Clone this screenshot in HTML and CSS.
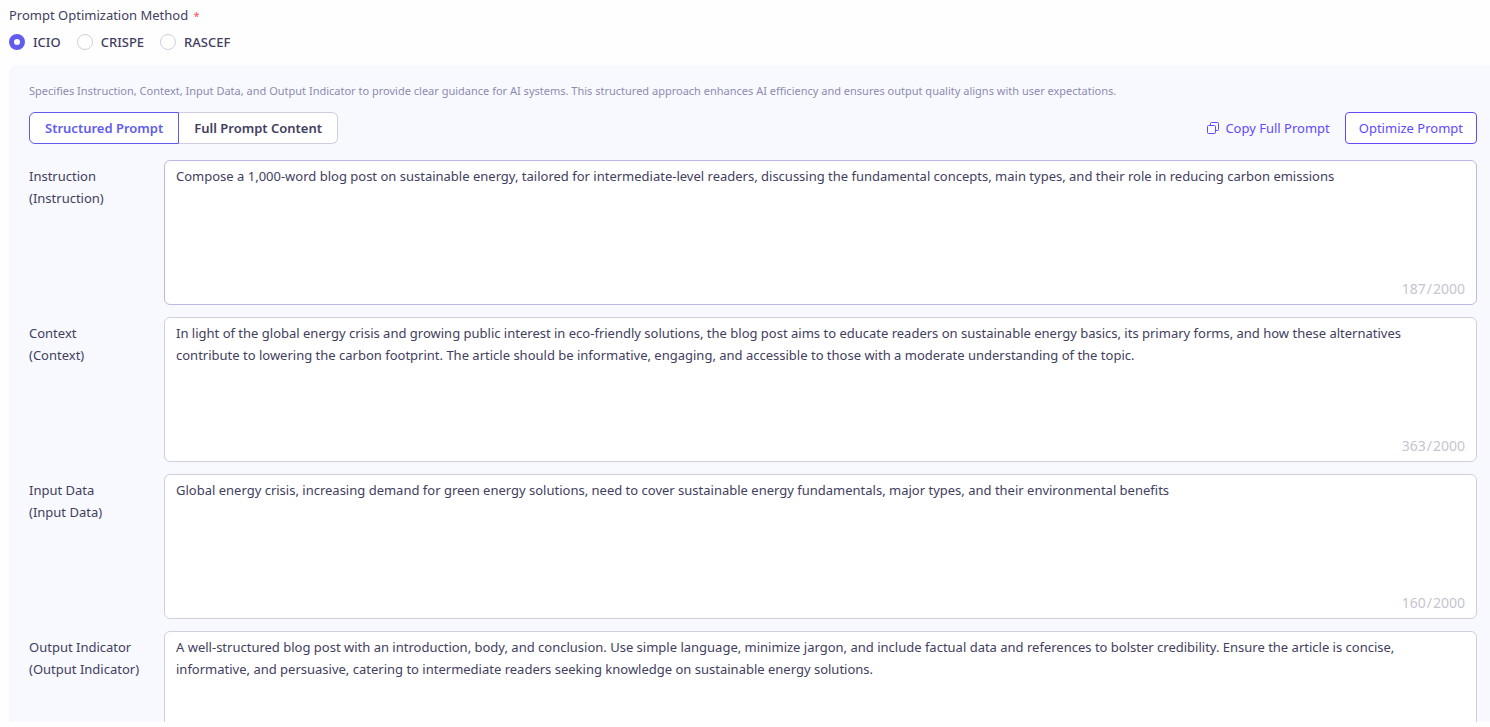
FILE: index.html
```html
<!DOCTYPE html>
<html lang="en">

<head>
    <meta charset="UTF-8">
    <meta name="viewport" content="width=device-width, initial-scale=1.0">
    <title>Prompt Optimization</title>
    <link rel="stylesheet" href="styles.css">
</head>

<body>
    <form class="optimizer">
        <fieldset class="method">
            <legend>Prompt Optimization Method <span class="required">*</span></legend>
            <div class="method-options">
                <label><input type="radio" name="method" value="icio" checked>ICIO</label>
                <label><input type="radio" name="method" value="crispe">CRISPE</label>
                <label><input type="radio" name="method" value="rascef">RASCEF</label>
            </div>
        </fieldset>

        <section class="panel">
            <p class="hint">Specifies Instruction, Context, Input Data, and Output Indicator to provide clear guidance for AI systems. This structured approach enhances AI efficiency and ensures output quality aligns with user expectations.</p>

            <div class="toolbar">
                <div class="tabs">
                    <button type="button" class="tab active">Structured Prompt</button>
                    <button type="button" class="tab">Full Prompt Content</button>
                </div>
                <div class="actions">
                    <button type="button" class="copy-btn">
                        <svg width="14" height="14" viewBox="0 0 14 14" fill="none" stroke="currentColor" aria-hidden="true">
                            <rect x="1.5" y="4.5" width="8" height="8" rx="1" />
                            <path d="M4.5 4.5v-2a1 1 0 0 1 1-1h6a1 1 0 0 1 1 1v6a1 1 0 0 1-1 1h-2" />
                        </svg>
                        Copy Full Prompt
                    </button>
                    <button type="button" class="optimize-btn">Optimize Prompt</button>
                </div>
            </div>

            <div class="field">
                <label for="instruction">Instruction<br>(Instruction)</label>
                <div class="input-box hovered">
                    <textarea id="instruction">Compose a 1,000-word blog post on sustainable energy, tailored for intermediate-level readers, discussing the fundamental concepts, main types, and their role in reducing carbon emissions</textarea>
                    <div class="counter">187<span>/</span>2000</div>
                </div>
            </div>

            <div class="field">
                <label for="context">Context<br>(Context)</label>
                <div class="input-box">
                    <textarea id="context">In light of the global energy crisis and growing public interest in eco-friendly solutions, the blog post aims to educate readers on sustainable energy basics, its primary forms, and how these alternatives contribute to lowering the carbon footprint. The article should be informative, engaging, and accessible to those with a moderate understanding of the topic.</textarea>
                    <div class="counter">363<span>/</span>2000</div>
                </div>
            </div>

            <div class="field">
                <label for="input-data">Input Data<br>(Input Data)</label>
                <div class="input-box">
                    <textarea id="input-data">Global energy crisis, increasing demand for green energy solutions, need to cover sustainable energy fundamentals, major types, and their environmental benefits</textarea>
                    <div class="counter">160<span>/</span>2000</div>
                </div>
            </div>

            <div class="field">
                <label for="output-indicator">Output Indicator<br>(Output Indicator)</label>
                <div class="input-box">
                    <textarea id="output-indicator">A well-structured blog post with an introduction, body, and conclusion. Use simple language, minimize jargon, and include factual data and references to bolster credibility. Ensure the article is concise, informative, and persuasive, catering to intermediate readers seeking knowledge on sustainable energy solutions.</textarea>
                </div>
            </div>
        </section>
    </form>
</body>

</html>
```

FILE: styles.css
```css
* {
    margin: 0;
    padding: 0;
    box-sizing: border-box;
}

body {
    background: #fefefe;
    color: #42405e;
    font-family: 'Segoe UI', 'Noto Sans', sans-serif;
    font-size: 13px;
    line-height: 22px;
}

button,
textarea {
    font: inherit;
    color: inherit;
}

.optimizer {
    height: calc(100vh - 5px);
    padding: 4px 0 0 9px;
    overflow: hidden;
}

.method {
    border: none;
    margin-bottom: 12px;
}

.required {
    margin-left: 2px;
    color: #ff4d4f;
    font-size: 11px;
}

.method-options {
    display: flex;
    gap: 16px;
    padding-top: 4px;
    font-weight: 500;
}

.method-options label {
    display: flex;
    align-items: center;
    gap: 8px;
}

.method-options input {
    appearance: none;
    width: 16px;
    height: 16px;
    border: 1px solid #d0cfde;
    border-radius: 50%;
    background: #fff;
}

.method-options input:checked {
    border: 5px solid #615ced;
}

.panel {
    background: #f8f9fe;
    border-radius: 8px 0 0 0;
    padding: 15px 13px 20px 20px;
}

.hint {
    color: #8d8bb0;
    font-size: 11px;
    margin-bottom: 10px;
}

.toolbar {
    display: flex;
    justify-content: space-between;
    margin-bottom: 16px;
}

.tabs,
.actions {
    display: flex;
}

.actions {
    gap: 15px;
}

.tab {
    height: 32px;
    padding: 0 15px;
    background: #fff;
    border: 1px solid #d0cfde;
    border-left: none;
    border-radius: 0 6px 6px 0;
    font-weight: 600;
}

.tab.active {
    border: 1px solid #615ced;
    border-radius: 6px 0 0 6px;
    color: #615ced;
}

.copy-btn,
.optimize-btn {
    height: 32px;
    background: none;
    border: none;
    color: #624aff;
}

.copy-btn {
    display: flex;
    align-items: center;
    gap: 5px;
}

.optimize-btn {
    padding: 0 13px;
    background: #fff;
    border: 1px solid #624aff;
    border-radius: 4px;
}

.field {
    display: grid;
    grid-template-columns: 135px 1fr;
    margin-bottom: 12px;
}

.field label {
    padding-top: 5px;
}

.input-box {
    display: flex;
    flex-direction: column;
    height: 145px;
    padding: 4px 11px;
    background: #fff;
    border: 1px solid #d0cfde;
    border-radius: 6px;
}

.input-box.hovered {
    border-color: #bdb8e6;
}

.input-box textarea {
    flex: 1;
    width: 100%;
    border: none;
    outline: none;
    resize: none;
    background: none;
}

.counter {
    color: #c6c5cf;
    font-size: 14px;
    text-align: right;
}

.counter span {
    margin: 0 1px;
}
```
